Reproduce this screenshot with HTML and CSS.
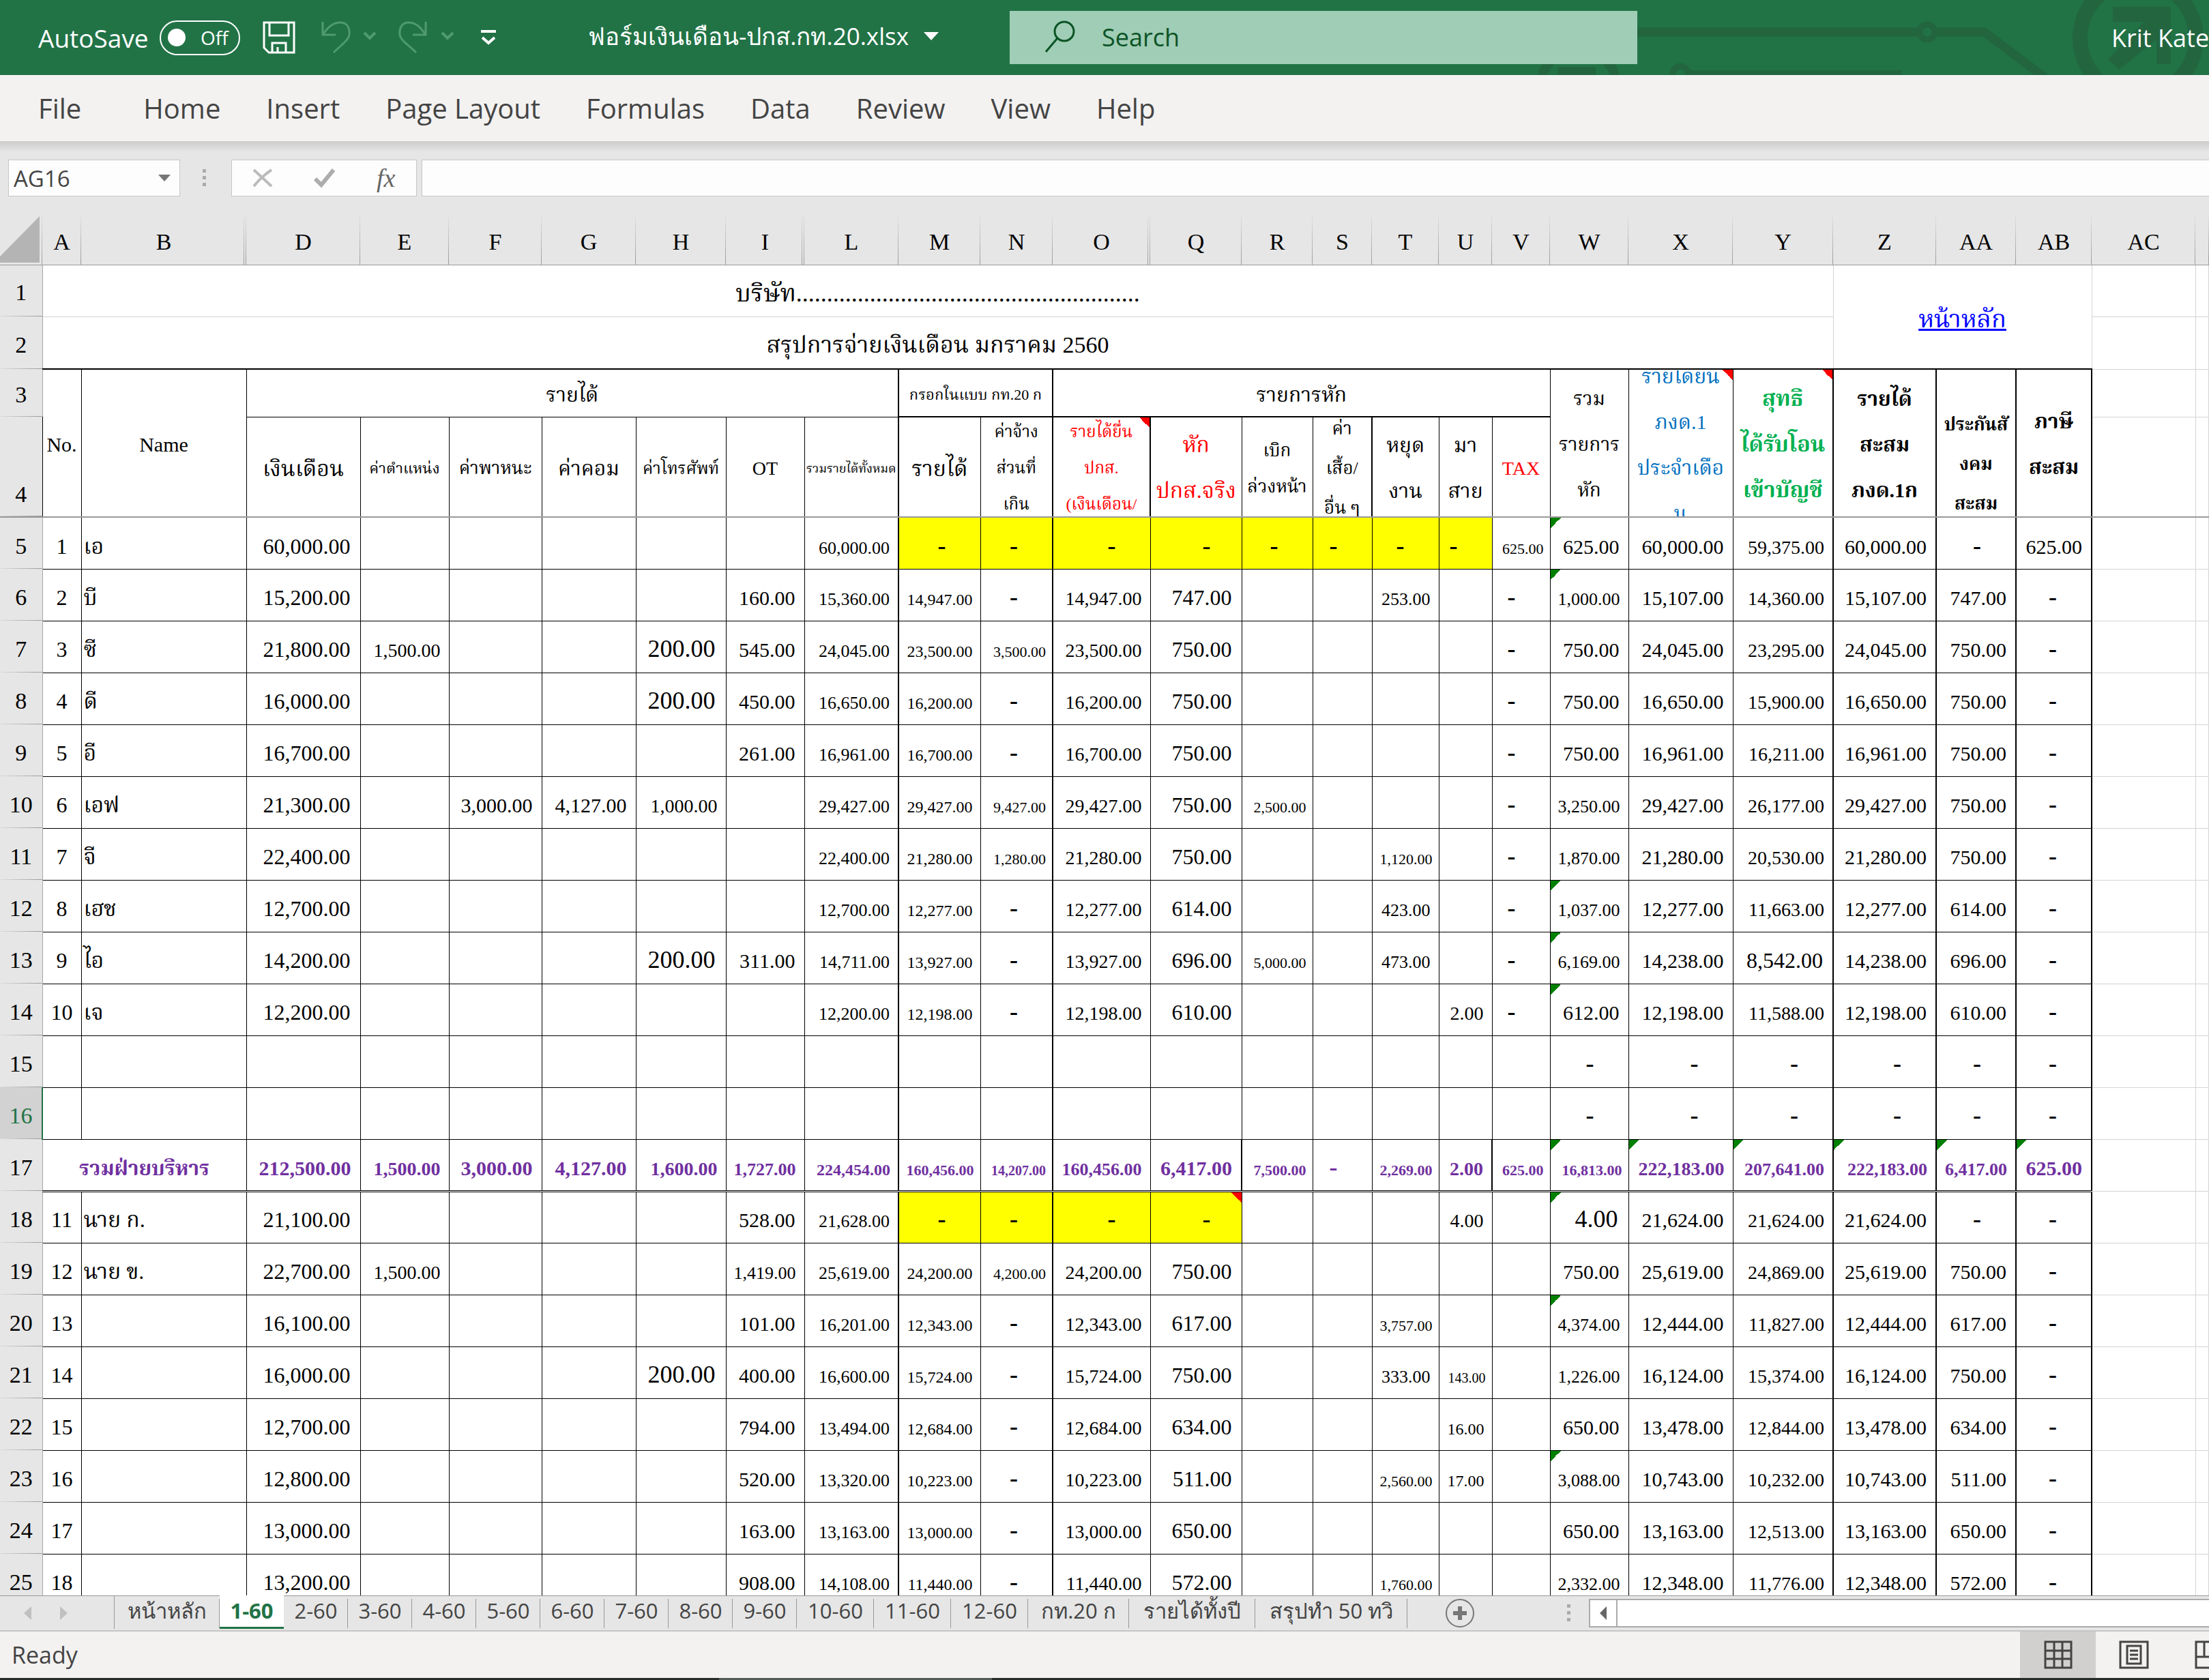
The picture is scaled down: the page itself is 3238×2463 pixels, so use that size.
FILE: index.html
```html
<!DOCTYPE html>
<html lang="th">
<head>
<meta charset="utf-8">
<title>ฟอร์มเงินเดือน-ปกส.กท.20.xlsx</title>
<link rel="stylesheet" href="styles.css">
</head>
<body>
<div class="app">
<header class="titlebar">
  <svg class="circuit" width="1000" height="110" viewBox="0 0 1000 110" aria-hidden="true">
    <g fill="none" stroke="#22653f">
      <path d="M150 47H580M602 47H671L765 118" stroke-width="13"/>
      <circle cx="587" cy="47" r="11" stroke-width="9"/>
      <path d="M240 108H550" stroke-width="10"/>
      <circle cx="225" cy="108" r="11" stroke-width="9"/>
      <circle cx="76" cy="128" r="56" stroke-width="14"/>
      <circle cx="896" cy="56" r="85" stroke-width="22"/>
    </g>
    <path d="M46 98H101V110H46zM859 10H944V94H923V58L868 102L852 87L905 32H859z" fill="#22653f"/>
  </svg>
  <div class="quick">
    <span class="autosave">AutoSave</span>
    <button class="toggle" type="button" aria-label="AutoSave"><span class="knob"></span><span>Off</span></button>
    <button class="tool save" type="button" aria-label="Save"><svg width="48" height="48" viewBox="0 0 48 48" fill="none" stroke="#fff" stroke-width="3"><path d="M2 2H46V46H9L2 39zM10 2V21H38V2M14 46V32H34V46M22 38V46"/></svg></button>
    <button class="tool undo" type="button" aria-label="Undo"><svg width="80" height="48" viewBox="0 0 80 48" fill="none" stroke="#4f9a6e" stroke-width="3"><path d="M2 1V20H21M3 19C11 6 20 2 28 2C38 2 42 10 41 20C40 28 30 34 18 46"/><path d="M63 17L71 25L79 17" stroke-width="4"/></svg></button>
    <button class="tool redo" type="button" aria-label="Redo"><svg width="82" height="48" viewBox="0 0 82 48" fill="none" stroke="#4f9a6e" stroke-width="3"><path d="M40 1V20H21M39 19C31 6 22 2 15 2C5 2 1 10 2 20C3 28 14 34 26 46"/><path d="M64 17L72 25L80 17" stroke-width="4"/></svg></button>
    <button class="tool more" type="button" aria-label="Customize"><svg width="24" height="24" viewBox="0 0 24 24" fill="none" stroke="#fff" stroke-width="4"><path d="M1 3H23M3 12L12 20L21 12"/></svg></button>
  </div>
  <div class="docname"><span>ฟอร์มเงินเดือน-ปกส.กท.20.xlsx</span><svg width="22" height="12" viewBox="0 0 22 12"><path d="M0 0H22L11 12z" fill="#fff"/></svg></div>
  <label class="search">
    <svg width="46" height="48" viewBox="0 0 46 48" fill="none" stroke="#0b5426" stroke-width="3"><circle cx="29" cy="16" r="14"/><path d="M19 26L2 46"/></svg>
    <input type="text" placeholder="Search" aria-label="Search">
  </label>
  <span class="user">Krit Kate</span>
</header>
<nav class="ribbon">
  <a href="#" class="file">File</a><a href="#">Home</a><a href="#">Insert</a><a href="#">Page Layout</a><a href="#">Formulas</a><a href="#">Data</a><a href="#">Review</a><a href="#">View</a><a href="#">Help</a>
</nav>
<div class="formulabar">
  <div class="namebox"><input type="text" value="AG16" aria-label="Name Box"><svg width="18" height="10" viewBox="0 0 18 10"><path d="M0 0H18L9 10z" fill="#777"/></svg></div>
  <svg class="grip" width="5" height="26" viewBox="0 0 5 26"><path d="M0 0H5V5H0zM0 10H5V15H0zM0 20H5V25H0z" fill="#ababab"/></svg>
  <div class="fxbox">
    <button type="button" aria-label="Cancel"><svg width="30" height="28" viewBox="0 0 30 28" fill="none" stroke="#bbb" stroke-width="4"><path d="M2 2L28 26M28 2C18 9 9 17 2 26"/></svg></button>
    <button type="button" aria-label="Enter"><svg width="32" height="28" viewBox="0 0 32 28" fill="none" stroke="#adadad" stroke-width="6"><path d="M2 15L11 24L29 2"/></svg></button>
    <button type="button" class="fx">fx</button>
  </div>
  <input class="formula" type="text" aria-label="Formula Bar">
</div>
<main class="sheet">
<table>
<colgroup><col class="w62"><col class="w57"><col class="w242"><col class="w167"><col class="w130"><col class="w136"><col class="w138"><col class="w132"><col class="w115"><col class="w138"><col class="w120"><col class="w106"><col class="w143"><col class="w134"><col class="w104"><col class="w87"><col class="w98"><col class="w78"><col class="w85"><col class="w115"><col class="w153"><col class="w147"><col class="w151"><col class="w117"><col class="w111"><col class="w152"><col></colgroup>
<thead>
<tr class="letters"><th class="corner"><svg width="62" height="76" viewBox="0 0 62 76"><path d="M58 6V74H0V65z" fill="#b4b4b4"/></svg></th><th>A</th><th class="hid">B</th><th>D</th><th>E</th><th>F</th><th>G</th><th>H</th><th class="hid">I</th><th>L</th><th>M</th><th>N</th><th class="hid">O</th><th>Q</th><th>R</th><th>S</th><th>T</th><th>U</th><th>V</th><th>W</th><th>X</th><th>Y</th><th>Z</th><th>AA</th><th>AB</th><th>AC</th><th></th></tr>
</thead>
<tbody class="head">
<tr class="r1"><th>1</th><td colspan="21" class="gl t36">บริษัท........................................................</td><td colspan="3" rowspan="2" class="gl link"><a href="#">หน้าหลัก</a></td><td class="gl"></td><td class="gl"></td></tr>
<tr class="r2"><th>2</th><td colspan="21" class="gl t34">สรุปการจ่ายเงินเดือน มกราคม 2560</td><td class="gl"></td><td class="gl"></td></tr>
<tr class="r3"><th>3</th><td rowspan="2" class="t30">No.</td><td rowspan="2" class="t30">Name</td><td colspan="7" class="t30 k">รายได้</td><td colspan="2" class="t22 k b2">กรอกในแบบ กท.20 ก</td><td colspan="7" class="t30 b2">รายการหัก</td><td rowspan="2" class="t28 lh67">รวม<br>รายการ<br>หัก</td><td rowspan="2" class="t30 lh67 blue note"><div class="clip tall">รายได้ยื่น<br>ภงด.1<br>ประจำเดือ<br>น</div></td><td rowspan="2" class="t32 lh67 green k note">สุทธิ<br>ได้รับโอน<br>เข้าบัญชี</td><td rowspan="2" class="t30 lh67 k bold">รายได้<br>สะสม<br>ภงด.1ก</td><td rowspan="2" class="t26 k bold"><div class="clip tall lh58"><br>ประกันสั<br>งคม<br>สะสม</div></td><td rowspan="2" class="t30 lh67 k bold">ภาษี<br>สะสม</td><td class="gl"></td><td class="gl"></td></tr>
<tr class="r4"><th>4</th><td class="t32">เงินเดือน</td><td class="t22">ค่าตำแหน่ง</td><td class="t26">ค่าพาหนะ</td><td class="t30">ค่าคอม</td><td class="t24">ค่าโทรศัพท์</td><td class="t28">OT</td><td class="t18 k">รวมรายได้ทั้งหมด</td><td class="t32 dash">รายได้</td><td class="t24 k"><div class="clip lh53">ค่าจ้าง<br>ส่วนที่<br>เกิน</div></td><td class="t24 red k note"><div class="clip lh53">รายได้ยื่น<br>ปกส.<br>(เงินเดือน/</div></td><td class="t32 lh67 red">หัก<br>ปกส.จริง</td><td class="t26 lh53">เบิก<br>ล่วงหน้า</td><td class="t26 k"><div class="clip lh58">ค่า<br>เสื้อ/<br>อื่น ๆ</div></td><td class="t30 lh67">หยุด<br>งาน</td><td class="t30 lh67">มา<br>สาย</td><td class="t28 red">TAX</td><td class="gl"></td><td class="gl"></td></tr>
</tbody>
<tbody class="data">
<tr><th>5</th><td>1</td><td>เอ</td><td>60,000.00</td><td></td><td></td><td></td><td></td><td></td><td>60,000.00</td><td class="d y">-</td><td class="d y">-</td><td class="d y">-</td><td class="d y thin">-</td><td class="d y">-</td><td class="d y">-</td><td class="d y">-</td><td class="d y">-</td><td>625.00</td><td class="g">625.00</td><td>60,000.00</td><td>59,375.00</td><td>60,000.00</td><td class="d">-</td><td>625.00</td><td></td><td></td></tr>
<tr><th>6</th><td>2</td><td>บี</td><td>15,200.00</td><td></td><td></td><td></td><td></td><td>160.00</td><td>15,360.00</td><td>14,947.00</td><td class="d">-</td><td>14,947.00</td><td>747.00</td><td></td><td></td><td>253.00</td><td></td><td class="d">-</td><td class="g s26">1,000.00</td><td>15,107.00</td><td>14,360.00</td><td>15,107.00</td><td>747.00</td><td class="d">-</td><td></td><td></td></tr>
<tr><th>7</th><td>3</td><td>ซี</td><td>21,800.00</td><td>1,500.00</td><td></td><td></td><td class="s36">200.00</td><td>545.00</td><td>24,045.00</td><td>23,500.00</td><td>3,500.00</td><td>23,500.00</td><td>750.00</td><td></td><td></td><td></td><td></td><td class="d">-</td><td>750.00</td><td>24,045.00</td><td>23,295.00</td><td>24,045.00</td><td>750.00</td><td class="d">-</td><td></td><td></td></tr>
<tr><th>8</th><td>4</td><td>ดี</td><td>16,000.00</td><td></td><td></td><td></td><td class="s36">200.00</td><td>450.00</td><td>16,650.00</td><td>16,200.00</td><td class="d">-</td><td>16,200.00</td><td>750.00</td><td></td><td></td><td></td><td></td><td class="d">-</td><td>750.00</td><td>16,650.00</td><td>15,900.00</td><td>16,650.00</td><td>750.00</td><td class="d">-</td><td></td><td></td></tr>
<tr><th>9</th><td>5</td><td>อี</td><td>16,700.00</td><td></td><td></td><td></td><td></td><td>261.00</td><td>16,961.00</td><td>16,700.00</td><td class="d">-</td><td>16,700.00</td><td>750.00</td><td></td><td></td><td></td><td></td><td class="d">-</td><td>750.00</td><td>16,961.00</td><td>16,211.00</td><td>16,961.00</td><td>750.00</td><td class="d">-</td><td></td><td></td></tr>
<tr><th>10</th><td>6</td><td>เอฟ</td><td>21,300.00</td><td></td><td>3,000.00</td><td>4,127.00</td><td>1,000.00</td><td></td><td>29,427.00</td><td>29,427.00</td><td>9,427.00</td><td>29,427.00</td><td>750.00</td><td>2,500.00</td><td></td><td></td><td></td><td class="d">-</td><td class="s26">3,250.00</td><td>29,427.00</td><td>26,177.00</td><td>29,427.00</td><td>750.00</td><td class="d">-</td><td></td><td></td></tr>
<tr><th>11</th><td>7</td><td>จี</td><td>22,400.00</td><td></td><td></td><td></td><td></td><td></td><td>22,400.00</td><td>21,280.00</td><td>1,280.00</td><td>21,280.00</td><td>750.00</td><td></td><td></td><td class="s22">1,120.00</td><td></td><td class="d">-</td><td class="s26">1,870.00</td><td>21,280.00</td><td>20,530.00</td><td>21,280.00</td><td>750.00</td><td class="d">-</td><td></td><td></td></tr>
<tr><th>12</th><td>8</td><td>เฮช</td><td>12,700.00</td><td></td><td></td><td></td><td></td><td></td><td>12,700.00</td><td>12,277.00</td><td class="d">-</td><td>12,277.00</td><td>614.00</td><td></td><td></td><td>423.00</td><td></td><td class="d">-</td><td class="g s26">1,037.00</td><td>12,277.00</td><td>11,663.00</td><td>12,277.00</td><td>614.00</td><td class="d">-</td><td></td><td></td></tr>
<tr><th>13</th><td>9</td><td>ไอ</td><td>14,200.00</td><td></td><td></td><td></td><td class="s36">200.00</td><td>311.00</td><td>14,711.00</td><td>13,927.00</td><td class="d">-</td><td>13,927.00</td><td>696.00</td><td>5,000.00</td><td></td><td>473.00</td><td></td><td class="d">-</td><td class="g s26">6,169.00</td><td>14,238.00</td><td class="s32">8,542.00</td><td>14,238.00</td><td>696.00</td><td class="d">-</td><td></td><td></td></tr>
<tr><th>14</th><td>10</td><td>เจ</td><td>12,200.00</td><td></td><td></td><td></td><td></td><td></td><td>12,200.00</td><td>12,198.00</td><td class="d">-</td><td>12,198.00</td><td>610.00</td><td></td><td></td><td></td><td>2.00</td><td class="d">-</td><td class="g">612.00</td><td>12,198.00</td><td>11,588.00</td><td>12,198.00</td><td>610.00</td><td class="d">-</td><td></td><td></td></tr>
<tr><th>15</th><td></td><td></td><td></td><td></td><td></td><td></td><td></td><td></td><td></td><td></td><td></td><td></td><td></td><td></td><td></td><td></td><td></td><td></td><td class="d">-</td><td class="d">-</td><td class="d">-</td><td class="d">-</td><td class="d">-</td><td class="d">-</td><td></td><td></td></tr>
<tr><th class="current">16</th><td></td><td></td><td></td><td></td><td></td><td></td><td></td><td></td><td></td><td></td><td></td><td></td><td></td><td></td><td></td><td></td><td></td><td></td><td class="d">-</td><td class="d">-</td><td class="d">-</td><td class="d">-</td><td class="d">-</td><td class="d">-</td><td></td><td></td></tr>
<tr class="total"><th>17</th><td colspan="2" class="t30">รวมฝ่ายบริหาร</td><td class="s30">212,500.00</td><td class="s28">1,500.00</td><td class="s30">3,000.00</td><td class="s30">4,127.00</td><td class="s28">1,600.00</td><td class="s26">1,727.00</td><td class="s24 k">224,454.00</td><td class="s22">160,456.00</td><td class="s20 k">14,207.00</td><td class="s26">160,456.00</td><td class="s30 k">6,417.00</td><td class="s22">7,500.00</td><td class="d">-</td><td class="s22">2,269.00</td><td class="s28 k">2.00</td><td class="s22">625.00</td><td class="s22 g">16,813.00</td><td class="s28 g">222,183.00</td><td class="s26 g k">207,641.00</td><td class="s26 g k">222,183.00</td><td class="s26 g k">6,417.00</td><td class="s30 g k">625.00</td><td class="gl"></td><td class="gl"></td></tr>
<tr><th>18</th><td>11</td><td>นาย ก.</td><td>21,100.00</td><td></td><td></td><td></td><td></td><td>528.00</td><td>21,628.00</td><td class="d y">-</td><td class="d y">-</td><td class="d y">-</td><td class="d y thin note">-</td><td></td><td></td><td></td><td>4.00</td><td></td><td class="g s36">4.00</td><td>21,624.00</td><td>21,624.00</td><td>21,624.00</td><td class="d">-</td><td class="d">-</td><td></td><td></td></tr>
<tr><th>19</th><td>12</td><td>นาย ข.</td><td>22,700.00</td><td>1,500.00</td><td></td><td></td><td></td><td class="s26">1,419.00</td><td>25,619.00</td><td>24,200.00</td><td>4,200.00</td><td>24,200.00</td><td>750.00</td><td></td><td></td><td></td><td></td><td></td><td>750.00</td><td>25,619.00</td><td>24,869.00</td><td>25,619.00</td><td>750.00</td><td class="d">-</td><td></td><td></td></tr>
<tr><th>20</th><td>13</td><td></td><td>16,100.00</td><td></td><td></td><td></td><td></td><td>101.00</td><td>16,201.00</td><td>12,343.00</td><td class="d">-</td><td>12,343.00</td><td>617.00</td><td></td><td></td><td class="s22">3,757.00</td><td></td><td></td><td class="g s26">4,374.00</td><td>12,444.00</td><td>11,827.00</td><td>12,444.00</td><td>617.00</td><td class="d">-</td><td></td><td></td></tr>
<tr><th>21</th><td>14</td><td></td><td>16,000.00</td><td></td><td></td><td></td><td class="s36">200.00</td><td>400.00</td><td>16,600.00</td><td>15,724.00</td><td class="d">-</td><td>15,724.00</td><td>750.00</td><td></td><td></td><td>333.00</td><td class="s20">143.00</td><td></td><td class="s26">1,226.00</td><td>16,124.00</td><td>15,374.00</td><td>16,124.00</td><td>750.00</td><td class="d">-</td><td></td><td></td></tr>
<tr><th>22</th><td>15</td><td></td><td>12,700.00</td><td></td><td></td><td></td><td></td><td>794.00</td><td>13,494.00</td><td>12,684.00</td><td class="d">-</td><td>12,684.00</td><td>634.00</td><td></td><td></td><td></td><td class="s24">16.00</td><td></td><td>650.00</td><td>13,478.00</td><td>12,844.00</td><td>13,478.00</td><td>634.00</td><td class="d">-</td><td></td><td></td></tr>
<tr><th>23</th><td>16</td><td></td><td>12,800.00</td><td></td><td></td><td></td><td></td><td>520.00</td><td>13,320.00</td><td>10,223.00</td><td class="d">-</td><td>10,223.00</td><td>511.00</td><td></td><td></td><td class="s22">2,560.00</td><td class="s24">17.00</td><td></td><td class="g s26">3,088.00</td><td>10,743.00</td><td>10,232.00</td><td>10,743.00</td><td>511.00</td><td class="d">-</td><td></td><td></td></tr>
<tr><th>24</th><td>17</td><td></td><td>13,000.00</td><td></td><td></td><td></td><td></td><td>163.00</td><td>13,163.00</td><td>13,000.00</td><td class="d">-</td><td>13,000.00</td><td>650.00</td><td></td><td></td><td></td><td></td><td></td><td>650.00</td><td>13,163.00</td><td>12,513.00</td><td>13,163.00</td><td>650.00</td><td class="d">-</td><td></td><td></td></tr>
<tr><th>25</th><td>18</td><td></td><td>13,200.00</td><td></td><td></td><td></td><td></td><td>908.00</td><td>14,108.00</td><td>11,440.00</td><td class="d">-</td><td>11,440.00</td><td>572.00</td><td></td><td></td><td class="s22">1,760.00</td><td></td><td></td><td class="s26">2,332.00</td><td>12,348.00</td><td>11,776.00</td><td>12,348.00</td><td>572.00</td><td class="d">-</td><td></td><td></td></tr>
</tbody>
</table>
</main>
<div class="tabstrip">
  <div class="arrows"><svg width="64" height="20" viewBox="0 0 64 20"><path d="M11 0V20L0 10zM53 0V20L64 10z" fill="#c0c0c0"/></svg></div>
  <nav class="tabs">
    <a href="#" class="w154">หน้าหลัก</a><a href="#" class="active w94">1-60</a><a href="#" class="w94">2-60</a><a href="#" class="w94">3-60</a><a href="#" class="w94">4-60</a><a href="#" class="w94">5-60</a><a href="#" class="w94">6-60</a><a href="#" class="w94">7-60</a><a href="#" class="w94">8-60</a><a href="#" class="w94">9-60</a><a href="#" class="w113">10-60</a><a href="#" class="w113">11-60</a><a href="#" class="w113">12-60</a><a href="#" class="w148">กท.20 ก</a><a href="#" class="w185">รายได้ทั้งปี</a><a href="#" class="w223">สรุปทำ 50 ทวิ</a>
  </nav>
  <div class="strip">
    <button class="add" type="button" aria-label="New sheet"><svg width="44" height="44" viewBox="0 0 44 44"><circle cx="22" cy="22" r="20" fill="none" stroke="#777" stroke-width="2"/><path d="M22 12V32M12 22H32" stroke="#777" stroke-width="6"/></svg></button>
    <svg class="grip2" width="5" height="26" viewBox="0 0 5 26"><path d="M0 0H5V5H0zM0 10H5V15H0zM0 20H5V25H0z" fill="#ababab"/></svg>
    <div class="hscroll"><button type="button" aria-label="Scroll left"><svg width="10" height="20" viewBox="0 0 10 20"><path d="M10 0V20L0 10z" fill="#666"/></svg></button></div>
  </div>
</div>
<footer class="status">
  <span>Ready</span>
  <div class="views">
    <button type="button" class="on" aria-label="Normal"><svg width="42" height="42" viewBox="0 0 42 42" fill="none" stroke="#444" stroke-width="3"><path d="M2 2H40V40H2zM15 2V40M27 2V40M2 15H40M2 27H40"/></svg></button>
    <button type="button" aria-label="Page Layout"><svg width="44" height="42" viewBox="0 0 44 42" fill="none" stroke="#444" stroke-width="3"><path d="M2 2H42V40H2zM12 8H32V34H12zM16 15H28M16 21H28M16 27H28"/></svg></button>
    <button type="button" aria-label="Page Break Preview"><svg width="44" height="42" viewBox="0 0 44 42" fill="none" stroke="#444" stroke-width="3"><path d="M2 2H42V40H2zM2 24H42M14 2V24M30 2V24"/></svg></button>
  </div>
</footer>
<div class="edge"></div>
</div>
</body>
</html>
```
FILE: styles.css
```css
* { box-sizing: border-box; }
body { margin: 0; font-family: "Open Sans", "Noto Sans", sans-serif; color: #444; overflow: hidden; }
button, input { font: inherit; color: inherit; border: 0; background: none; padding: 0; margin: 0; }
a { color: inherit; text-decoration: none; }
svg { display: block; flex: none; }
.app { height: 100vh; display: flex; flex-direction: column; background: #e6e6e6; overflow: hidden; }

/* title bar */
.titlebar { position: relative; flex: none; height: 110px; background: #217346; color: #fff; display: grid; grid-template-columns: 862px 618px 920px 1fr 143px; align-items: center; font-size: 37px; }
.circuit { position: absolute; right: 0; top: 0; }
.quick { display: flex; align-items: center; padding-left: 56px; }
.autosave { width: 178px; white-space: nowrap; }
.toggle { width: 118px; height: 51px; border: 2px solid #fff; border-radius: 26px; display: flex; align-items: center; gap: 22px; padding-left: 10px; font-size: 28px; }
.knob { width: 26px; height: 26px; border-radius: 50%; background: #fff; }
.save { margin-left: 33px; }
.undo { margin-left: 38px; }
.redo { margin-left: 33px; }
.more { margin-left: 38px; }
.docname { display: flex; align-items: center; gap: 22px; white-space: nowrap; font-size: 35px; padding-bottom: 4px; }
.search { position: relative; height: 78px; background: #a0cdb5; display: flex; align-items: center; padding: 0 0 2px 51px; gap: 38px; color: #0b5426; font-size: 36px; }
.search input { flex: 1; min-width: 0; outline: 0; }
.search input::placeholder { color: #0b5426; opacity: 1; }
.user { position: relative; grid-column: 5; white-space: nowrap; font-size: 36px; }

/* ribbon tabs */
.ribbon { flex: none; height: 97px; background: #f3f2f1; display: flex; align-items: center; gap: 67px; padding-left: 56px; font-size: 40px; }
.file { margin-right: 24px; }

/* formula bar */
.formulabar { flex: none; height: 104px; display: flex; align-items: center; padding: 4px 0 0 12px; background: linear-gradient(#cccccc, #e6e6e6 16px); }
.namebox { width: 252px; height: 54px; background: #fdfdfd; border: 1px solid #c6c6c6; display: flex; align-items: center; padding: 0 13px 0 7px; font-size: 33px; }
.namebox input { flex: 1; min-width: 0; }
.grip { margin: 0 37px 0 33px; }
.fxbox { width: 272px; height: 54px; background: #fdfdfd; border: 1px solid #c6c6c6; display: flex; align-items: center; gap: 60px; padding-left: 30px; }
.fx { font-family: "Liberation Serif", serif; font-style: italic; font-size: 38px; color: #666; line-height: 40px; }
.formula { flex: 1; min-width: 0; height: 54px; margin-left: 7px; background: #fdfdfd; border: 1px solid #c6c6c6; border-right: 0; }

/* grid */
.sheet { flex: 1; min-height: 0; overflow: hidden; background: #fff; font-family: "Liberation Serif", "Norasi", "Noto Serif Thai", serif; color: #000; }
table { width: 100%; table-layout: fixed; border-collapse: collapse; }
.w57 { width: 57px; } .w62 { width: 62px; } .w78 { width: 78px; } .w85 { width: 85px; } .w87 { width: 87px; }
.w98 { width: 98px; } .w104 { width: 104px; } .w106 { width: 106px; } .w111 { width: 111px; } .w115 { width: 115px; }
.w117 { width: 117px; } .w120 { width: 120px; } .w130 { width: 130px; } .w132 { width: 132px; } .w134 { width: 134px; }
.w136 { width: 136px; } .w138 { width: 138px; } .w143 { width: 143px; } .w147 { width: 147px; } .w151 { width: 151px; }
.w152 { width: 152px; } .w153 { width: 153px; } .w167 { width: 167px; } .w242 { width: 242px; }
th, td { padding: 0; font-weight: normal; white-space: nowrap; overflow: hidden; }
th { font-size: 34px; background: #e6e6e6; }
.letters th { height: 77px; padding-top: 12px; border-bottom: 1px solid #999; background: linear-gradient(#e6e6e6, #999) right / 1px 100% no-repeat #e6e6e6; }
.letters th.hid { background: linear-gradient(#e6e6e6, #999) right 3px top / 1px 100% no-repeat, linear-gradient(#e6e6e6, #999) right / 1px 100% no-repeat #e6e6e6; }
.letters .corner { padding: 0; }
tbody th { border-right: 1px solid #a6a6a6; background: linear-gradient(to right, #dcdcdc, #999) bottom / 100% 1px no-repeat #e6e6e6; }
td { border: 1px solid #000; }
td.gl { border: 1px solid #d4d4d4; }
.head td { text-align: center; line-height: 40px; padding-top: 5px; }
.r1 { height: 76px; } .r2 { height: 77px; } .r3 { height: 70px; } .r4 { height: 147px; }
.head .r1 td, .head .r2 td { padding-top: 8px; }
.r3 td:not(.gl) { border-top: 2px solid #000; }
.head th { padding-top: 6px; }
.r4 th { vertical-align: bottom; padding-bottom: 13px; }
.r4 { border-bottom: 2px solid #999; }
.head .r4 td, .head .r4 th, .head td[rowspan="2"]:not(.link) { border-bottom: 2px solid #999; }
.link { font-size: 36px; }
.link a { color: #00f; text-decoration: underline; }
.t18 { font-size: 18px; } .t22 { font-size: 22px; } .t24 { font-size: 24px; } .t26 { font-size: 26px; } .t28 { font-size: 28px; }
.t30 { font-size: 30px; } .t32 { font-size: 32px; } .t34 { font-size: 34px; } .t36 { font-size: 36px; }
.head .lh53 { line-height: 53px; } .head .lh58 { line-height: 58px; } .head .lh67 { line-height: 67px; padding-top: 3px; }
.head td:has(.clip) { padding: 0; }
.clip { height: 144px; overflow: hidden; display: grid; align-content: center; padding-top: 4px; }
.clip.tall { height: 214px; }
td.k { border-right-width: 2px; }
td.b2 { border-bottom-width: 2px; }
.dash { border-right-style: dashed; }
.bold, .green { font-weight: bold; }
.red { color: #f00; } .blue { color: #0070c0; } .green { color: #00b050; }
.note { background: linear-gradient(225deg, #f00 50%, transparent 50%) right top / 15px 15px no-repeat; }

.data tr { height: 76px; }
.data th, .data td { vertical-align: baseline; line-height: 40px; text-align: right; }
.data th { line-height: 66px; padding-top: 9px; text-align: center; }
.data td:nth-child(2) { font-size: 32px; text-align: center; }
.data tr:not(.total) td:nth-child(3) { font-size: 32px; text-align: left; padding-left: 3px; }
.data td:nth-child(4), .data td:nth-child(14), .s32.s32.s32.s32 { font-size: 32px; padding-right: 14px; }
.data td:nth-child(n+6):nth-child(-n+7), .data td:nth-child(9), .data td:nth-child(n+20), .s30.s30.s30.s30 { font-size: 30px; padding-right: 13px; }
.data td:nth-child(5), .data td:nth-child(8), .data td:nth-child(13), .data td:nth-child(18), .data td:nth-child(22), .s28.s28.s28.s28 { font-size: 28px; padding-right: 12px; }
.data td:nth-child(10), .data td:nth-child(17), .s26.s26.s26.s26 { font-size: 26px; padding-right: 12px; }
.data td:nth-child(11), .s24.s24.s24.s24 { font-size: 24px; padding-right: 11px; }
.data td:nth-child(12), .data td:nth-child(15), .data td:nth-child(19), .s22.s22.s22.s22 { font-size: 22px; padding-right: 9px; }
.s20.s20.s20.s20 { font-size: 20px; padding-right: 9px; }
.s36.s36.s36.s36 { font-size: 36px; padding-right: 15px; }
.data .d.d.d { font-size: 36px; font-weight: bold; padding-right: 50px; padding-left: 0; }
.data .d.d.thin { font-weight: normal; padding-right: 45px; }
.data tr:not(.total) td:nth-child(10), .data tr:not(.total) td:nth-child(12), .data tr:not(.total) td:nth-child(22), .data tr:not(.total) td:nth-child(23), .data tr:not(.total) td:nth-child(24), .data tr:not(.total) td:nth-child(25) { border-right-width: 2px; }
.data tr:not(.total) td:nth-child(n+26) { border: 1px solid #d4d4d4; }
.y { background-color: #ff0; }
.g { background: linear-gradient(135deg, #008000 50%, transparent 50%) left top / 15px 15px no-repeat; }
.y.note { background-color: #ff0; }
.data .current { background-color: #d2d2d2; color: #217346; border-right: 2px solid #217346; }
.total td:not(.gl) { color: #7030a0; font-weight: bold; border-bottom: 3px double #000; }
.data .total td:nth-child(2) { text-align: center; font-size: 30px; }

/* sheet tabs */
.tabstrip { flex: none; height: 53px; display: flex; align-items: flex-start; border-bottom: 2px solid #c6c6c6; color: #444; }
.arrows { width: 167px; height: 51px; border-top: 1px solid #999; padding: 15px 0 0 35px; }
.tabs { display: flex; height: 49px; font-size: 31px; line-height: 42px; border-left: 1px solid #999; }
.tabs a { border-top: 1px solid #999; text-align: center; white-space: nowrap; background: linear-gradient(#999, #999) right 4px / 1px 43px no-repeat; }
.tabs a.active { background: #fff; border-top-color: #fff; border-bottom: 3px solid #217346; color: #217346; font-weight: bold; }
.w94 { width: 94px; } .w113 { width: 113px; } .w148 { width: 148px; } .w154 { width: 154px; } .w185 { width: 185px; } .w223 { width: 223px; }
.strip { flex: 1; height: 51px; display: flex; align-items: center; border-top: 1px solid #999; padding-left: 55px; }
.grip2 { margin: 0 27px 0 135px; }
.hscroll { flex: 1; height: 42px; background: #fff; border: 2px solid #ababab; border-right: 0; }
.hscroll button { width: 40px; height: 38px; border-right: 2px solid #ababab; display: grid; place-items: center; }

/* status bar */
.status { flex: none; height: 68px; background: #f3f2f1; display: flex; align-items: center; justify-content: space-between; padding-left: 17px; font-size: 34px; overflow: hidden; }
.views { display: flex; width: 277px; height: 68px; overflow: hidden; }
.views button { flex: none; width: 111px; display: grid; place-items: center; }
.views .on { background: #d2d0ce; }
.edge { flex: none; height: 3px; background: linear-gradient(#555b55, #555b55) 1054px 0 / 400px 3px no-repeat #262c26; }
```
